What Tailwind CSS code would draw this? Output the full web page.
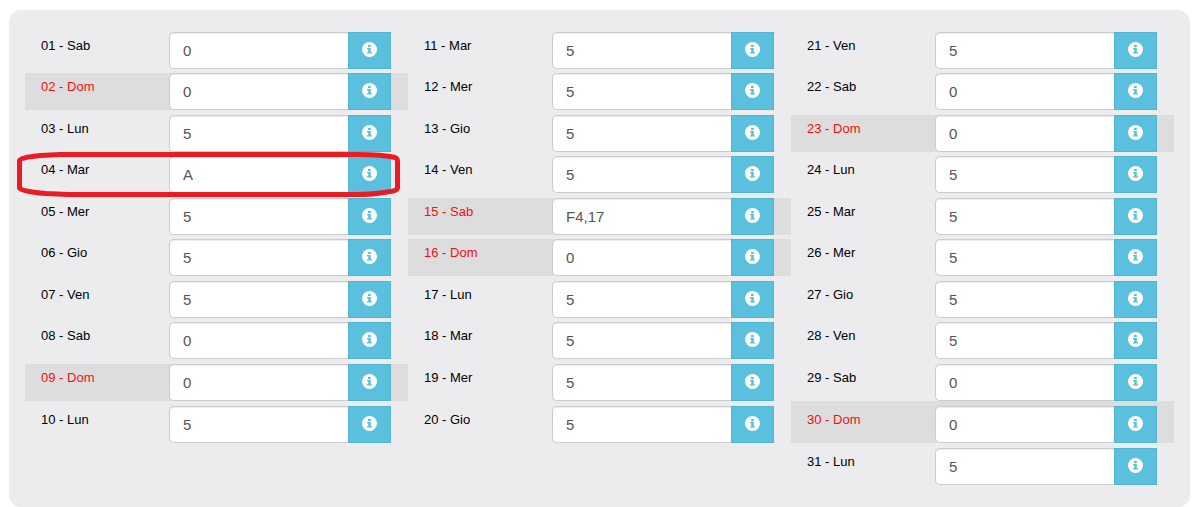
<!DOCTYPE html>
<html lang="it">
  <head>
    <meta charset="UTF-8" />
    <meta name="viewport" content="width=device-width, initial-scale=1.0" />
    <script src="https://cdn.jsdelivr.net/npm/@tailwindcss/browser@4"></script>
    <title>Ore mensili</title>
  </head>
  <body class="bg-white font-['Liberation_Sans',Arial,sans-serif]">
    <form class="mt-[10px] ml-[9px] mr-[2px] px-4 pt-[22px] pb-[22px] rounded-xl bg-[#ececee]">
      <div id="days" class="grid grid-cols-3 items-start"></div>
    </form>

    <script>
      const names = ["Sab", "Dom", "Lun", "Mar", "Mer", "Gio", "Ven"];
      const values = [
        "0", "0", "5", "A", "5", "5", "5", "0", "0", "5",
        "5", "5", "5", "5", "F4,17", "0", "5", "5", "5", "5",
        "5", "0", "0", "5", "5", "5", "5", "5", "0", "0", "5",
      ];
      const holidays = [2, 9, 15, 16, 23, 30];
      const marked = 4;

      const infoIcon = `
        <svg class="size-[15px] mb-[2px]" viewBox="0 0 15 15" aria-hidden="true">
          <circle cx="7.5" cy="7.5" r="7.5" fill="#fff" />
          <path d="M6 3h2.8v2H6zM5 6h3.8v4.2H10v1.300H5v-1.300h1.200V7.200H5z" fill="#5bc0de" />
        </svg>`;

      // hand drawn ring around the marked day
      const ring = `
        <svg class="absolute -left-2 -top-1 w-[calc(100%+1px)] h-[46px] pointer-events-none" viewBox="0 0 384 46" preserveAspectRatio="none" aria-hidden="true">
          <path d="M2.5 8.5C3 6 12 4.5 24 3.5L43 2.5H340C356 2.5 372 4 378 5.5Q380.5 6.5 380.5 9V36Q380 39 370 40C360 42 350 42.5 338 42.5H51L29 41.5C16 40.5 3 38.5 2.5 36Z" fill="none" stroke="#e91c24" stroke-width="5" stroke-linejoin="round" />
        </svg>`;

      function row(day) {
        const id = "day" + day;
        const holiday = holidays.includes(day);
        const label = String(day).padStart(2, "0") + " - " + names[(day - 1) % 7];
        return `
          <div class="relative flex items-start pr-[17px] mb-1 even:mb-[5px] nth-9:mb-0 nth-10:pt-[5px] last:mb-0 ${holiday ? "bg-[#dddddd] text-[#f01010]" : "text-black"}">
            <label for="${id}" class="w-36 shrink-0 pl-4 pt-[5px] text-[13px] leading-[18px]">${label}</label>
            <input type="text" id="${id}" name="${id}" value="${values[day - 1]}"
              class="flex-1 min-w-0 h-[37px] px-[13px] bg-white border border-r-0 border-[#ccc] rounded-l-[5px] text-[15px] text-[#555] shadow-[inset_0_1px_1px_rgba(0,0,0,0.075)]" />
            <button type="button" aria-label="Info ${label}"
              class="w-[43px] h-[37px] flex items-center justify-center bg-[#5bc0de] border border-[#52b5d2]">${infoIcon}</button>
            ${day === marked ? ring : ""}
          </div>`;
      }

      function column(from, to) {
        let html = "";
        for (let day = from; day <= to; day++) html += row(day);
        return `<div>${html}</div>`;
      }

      document.getElementById("days").innerHTML =
        column(1, 10) + column(11, 20) + column(21, 31);
    </script>
  </body>
</html>
